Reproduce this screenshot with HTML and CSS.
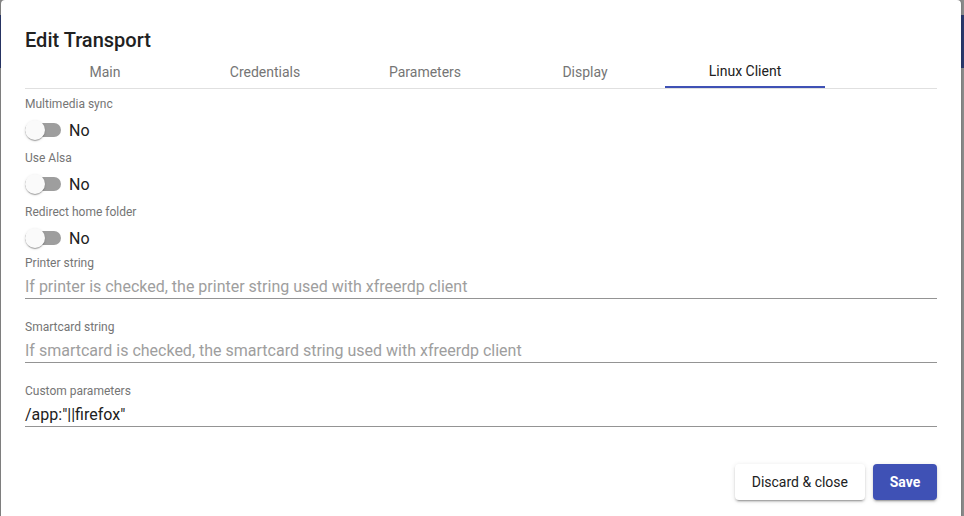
FILE: index.html
```html
<!DOCTYPE html>
<html>
<head>
<meta charset="utf-8">
<link rel="stylesheet" href="styles.css">
</head>
<body>
<div class="backdrop">
  <div class="bar bar-left"></div>
  <div class="bar bar-right"></div>
  <div class="dialog">
    <h2 class="title">Edit Transport</h2>
    <div class="tabs">
      <div class="tab">Main</div>
      <div class="tab">Credentials</div>
      <div class="tab">Parameters</div>
      <div class="tab">Display</div>
      <div class="tab active">Linux Client</div>
    </div>
    <div class="content">
      <div class="toggle-group">
        <div class="label">Multimedia sync</div>
        <div class="toggle-row"><span class="toggle"><span class="thumb"></span></span><span class="toggle-text">No</span></div>
      </div>
      <div class="toggle-group">
        <div class="label">Use Alsa</div>
        <div class="toggle-row"><span class="toggle"><span class="thumb"></span></span><span class="toggle-text">No</span></div>
      </div>
      <div class="toggle-group last">
        <div class="label">Redirect home folder</div>
        <div class="toggle-row"><span class="toggle"><span class="thumb"></span></span><span class="toggle-text">No</span></div>
      </div>
      <div class="field">
        <div class="label">Printer string</div>
        <div class="input placeholder">If printer is checked, the printer string used with xfreerdp client</div>
      </div>
      <div class="field">
        <div class="label">Smartcard string</div>
        <div class="input placeholder">If smartcard is checked, the smartcard string used with xfreerdp client</div>
      </div>
      <div class="field">
        <div class="label">Custom parameters</div>
        <div class="input">/app:"||firefox"</div>
      </div>
    </div>
    <div class="actions">
      <button class="btn btn-plain">Discard &amp; close</button>
      <button class="btn btn-primary">Save</button>
    </div>
  </div>
</div>
</body>
</html>
```
FILE: styles.css
```css
html, body {
  margin: 0;
  padding: 0;
  height: 100%;
  overflow: hidden;
}
body {
  font-family: Roboto, "Liberation Sans", sans-serif;
  background: #8d8d8d;
}
.backdrop {
  position: relative;
  height: 516px;
  padding-left: 1px;
}
.bar {
  position: absolute;
  top: 15px;
  height: 53px;
  background: #2b3a6e;
}
.bar-left { left: 0; width: 2px; }
.bar-right { right: 0; width: 5px; }
.dialog {
  position: relative;
  width: 912px;
  height: 540px;
  background: #fff;
  border-radius: 4px;
  padding: 0 24px;
  box-shadow: 0 0 3px rgba(0,0,0,0.3);
}
.title {
  margin: 0;
  padding-top: 24px;
  font-size: 20px;
  font-weight: 500;
  line-height: 32px;
  color: #212121;
}
.tabs {
  display: flex;
  border-bottom: 1px solid #e0e0e0;
}
.tab {
  width: 160px;
  height: 32px;
  line-height: 32px;
  text-align: center;
  font-size: 14px;
  color: #757575;
  box-sizing: border-box;
}
.tab.active {
  color: #212121;
  border-bottom: 2px solid #3f51b5;
  line-height: 30px;
}
.content {
  padding-top: 7px;
}
.label {
  font-size: 12px;
  line-height: 16px;
  color: #757575;
}
.toggle-group {
  padding-bottom: 8px;
}
.toggle-group.last {
  padding-bottom: 5px;
}
.toggle-row {
  display: flex;
  align-items: center;
  height: 24px;
  margin-top: 6px;
}
.toggle {
  position: relative;
  width: 36px;
  height: 14px;
  border-radius: 7px;
  background: #9e9e9e;
}
.thumb {
  position: absolute;
  left: 0;
  top: -3px;
  width: 20px;
  height: 20px;
  border-radius: 50%;
  background: #fafafa;
  box-shadow: 0 2px 1px -1px rgba(0,0,0,.2), 0 1px 1px 0 rgba(0,0,0,.14), 0 1px 3px 0 rgba(0,0,0,.12);
}
.toggle-text {
  margin-left: 8px;
  font-size: 16px;
  color: #212121;
}
.field {
  margin-bottom: 20px;
}
.input {
  font-size: 16px;
  line-height: 18px;
  padding-top: 7px;
  padding-bottom: 2px;
  border-bottom: 1px solid #949494;
  color: #212121;
}
.input.placeholder {
  color: #9e9e9e;
}
.actions {
  display: flex;
  justify-content: flex-end;
  gap: 8px;
  padding-top: 17px;
}
.btn {
  font-family: Roboto, "Liberation Sans", sans-serif;
  font-size: 14px;
  font-weight: 500;
  height: 36px;
  min-width: 64px;
  padding: 0 16px;
  border: none;
  border-radius: 4px;
}
.btn-plain {
  background: #fff;
  color: #212121;
  font-weight: 400;
  padding: 0 17px;
  box-shadow: 0 3px 1px -2px rgba(0,0,0,.2), 0 2px 2px 0 rgba(0,0,0,.14), 0 1px 5px 0 rgba(0,0,0,.12);
}
.btn-primary {
  background: #3f51b5;
  color: #fff;
  font-weight: 700;
  box-shadow: 0 3px 1px -2px rgba(0,0,0,.2), 0 2px 2px 0 rgba(0,0,0,.14), 0 1px 5px 0 rgba(0,0,0,.12);
}
```
